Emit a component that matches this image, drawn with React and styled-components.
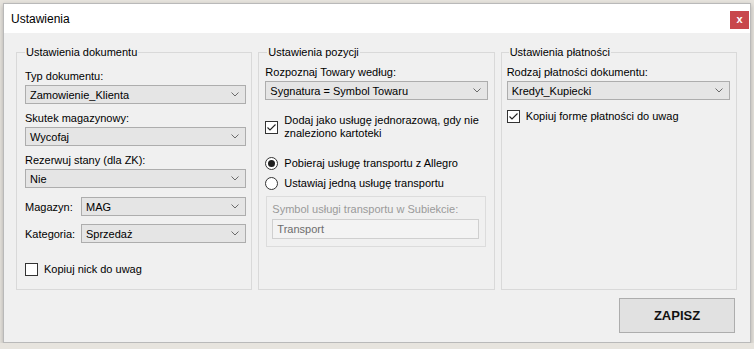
import React from 'react'
import styled, { createGlobalStyle } from 'styled-components'

const GlobalStyle = createGlobalStyle`
    html, body {
        margin: 0;
        padding: 0;
        background: #e7e4de;
        font-family: 'Liberation Sans', Arial, sans-serif;
    }
    * {
        box-sizing: border-box;
    }
`

const Window = styled.div`
    margin: 3px 0 0 3px;
    width: 748px;
    height: 340px;
    background: #f0f0f0;
    border: 1px solid #b9b9b9;
    box-shadow: 0 2px 5px rgba(0, 0, 0, 0.25);
    display: flex;
    flex-direction: column;
`

const TitleBar = styled.div`
    height: 29px;
    background: #ffffff;
    display: flex;
    justify-content: space-between;
    align-items: flex-start;
    padding-left: 7px;
`

const Title = styled.span`
    font-size: 12px;
    line-height: 14px;
    margin-top: 8px;
    color: #000;
`

const CloseButton = styled.div`
    width: 19px;
    height: 18px;
    margin-top: 7px;
    margin-right: 1px;
    background: #c8474c;
    color: #fff;
    font-size: 11px;
    font-weight: bold;
    display: flex;
    align-items: center;
    justify-content: center;
    padding-bottom: 2px;
`

const Content = styled.div`
    flex: 1;
    display: flex;
    flex-direction: column;
    padding: 12px 13px 9px 12px;
`

const Columns = styled.div`
    flex: 1;
    display: grid;
    grid-template-columns: 1fr 1fr 1fr;
    gap: 6px;
`

const Group = styled.fieldset`
    margin: 0;
    min-width: 0;
    border: 1px solid #d9d9d9;
    padding: ${(p) => p.$pt}px ${(p) => p.$pr}px 0 ${(p) => p.$pl}px;
    display: flex;
    flex-direction: column;
`

const Legend = styled.legend`
    font-size: 11px;
    line-height: 14px;
    padding: 0 1px;
    margin-left: ${(p) => p.$ml || 0}px;
    color: #000;
`

const Label = styled.div`
    font-size: 11px;
    line-height: 14px;
    color: #000;
    margin-top: ${(p) => p.$mt || 0}px;
    white-space: nowrap;
`

const Combo = styled.div`
    flex: none;
    height: 19px;
    margin-top: ${(p) => p.$mt || 0}px;
    background: #e5e5e5;
    border: 1px solid #adadad;
    display: flex;
    align-items: center;
    justify-content: space-between;
    padding: 0 6px 0 4px;
    font-size: 11px;
    color: #000;
    min-width: 0;
`

const InlineRow = styled.div`
    display: grid;
    grid-template-columns: 56px 1fr;
    align-items: center;
    margin-top: ${(p) => p.$mt || 0}px;
`

const CheckRow = styled.div`
    display: flex;
    align-items: center;
    gap: 6px;
    margin-top: ${(p) => p.$mt || 0}px;
    font-size: 11px;
    line-height: ${(p) => p.$lh || 14}px;
    color: #000;
`

const Box = styled.span`
    flex: none;
    width: 13px;
    height: 13px;
    border: 1px solid #333;
    background: #fff;
    display: flex;
    align-items: center;
    justify-content: center;
    border-radius: ${(p) => (p.$round ? '50%' : '0')};
`

const Dot = styled.span`
    width: 7px;
    height: 7px;
    border-radius: 50%;
    background: #1f1f1f;
`

const Panel = styled.div`
    margin: ${(p) => p.$mt || 0}px 2px 0 1px;
    border: 1px solid #dcdcdc;
    padding: 5px 6px 7px 5px;
`

const DisabledLabel = styled.div`
    font-size: 11px;
    line-height: 14px;
    color: #9a9a9a;
`

const TextBox = styled.div`
    margin-top: 3px;
    height: 20px;
    border: 1px solid #cfcfcf;
    background: #f3f3f3;
    font-size: 11px;
    color: #6d6d6d;
    display: flex;
    align-items: center;
    padding-left: 4px;
`

const Footer = styled.div`
    display: flex;
    justify-content: flex-end;
    margin-top: 8px;
    padding-right: 2px;
`

const SaveButton = styled.button`
    width: 116px;
    height: 35px;
    background: #e1e1e1;
    border: 1px solid #adadad;
    font-family: 'Liberation Sans', Arial, sans-serif;
    font-weight: bold;
    font-size: 13px;
    color: #111;
    padding: 0;
`

function Chevron() {
    return (
        <svg width="8" height="5" viewBox="0 0 8 5">
            <path d="M0.5 0.5 L4 4 L7.5 0.5" fill="none" stroke="#6a6a6a" strokeWidth="1" />
        </svg>
    )
}

function Select({ value, mt }) {
    return (
        <Combo $mt={mt}>
            <span>{value}</span>
            <Chevron />
        </Combo>
    )
}

function Checkbox({ checked }) {
    return (
        <Box>
            {checked && (
                <svg width="11" height="11" viewBox="0 0 11 11">
                    <path d="M1.5 5.5 L4 8 L9.5 2.5" fill="none" stroke="#222" strokeWidth="1.1" />
                </svg>
            )}
        </Box>
    )
}

function Radio({ checked }) {
    return <Box $round>{checked && <Dot />}</Box>
}

function App() {
    return (
        <>
            <GlobalStyle />
            <Window>
                <TitleBar>
                    <Title>Ustawienia</Title>
                    <CloseButton>x</CloseButton>
                </TitleBar>
                <Content>
                    <Columns>
                        <Group $pt={10} $pl={8} $pr={5}>
                            <Legend>Ustawienia dokumentu</Legend>
                            <Label>Typ dokumentu:</Label>
                            <Select mt={2} value="Zamowienie_Klienta" />
                            <Label $mt={7}>Skutek magazynowy:</Label>
                            <Select mt={2} value="Wycofaj" />
                            <Label $mt={7}>Rezerwuj stany (dla ZK):</Label>
                            <Select mt={2} value="Nie" />
                            <InlineRow $mt={9}>
                                <Label>Magazyn:</Label>
                                <Select value="MAG" />
                            </InlineRow>
                            <InlineRow $mt={8}>
                                <Label>Kategoria:</Label>
                                <Select value="Sprzedaż" />
                            </InlineRow>
                            <CheckRow $mt={19}>
                                <Checkbox />
                                Kopiuj nick do uwag
                            </CheckRow>
                        </Group>
                        <Group $pt={6} $pl={6} $pr={6}>
                            <Legend $ml={2}>Ustawienia pozycji</Legend>
                            <Label>Rozpoznaj Towary według:</Label>
                            <Select mt={2} value="Sygnatura = Symbol Towaru" />
                            <CheckRow $mt={14} $lh={13}>
                                <Checkbox checked />
                                <span>
                                    Dodaj jako usługę jednorazową, gdy nie
                                    <br />
                                    znaleziono kartoteki
                                </span>
                            </CheckRow>
                            <CheckRow $mt={16}>
                                <Radio checked />
                                Pobieraj usługę transportu z Allegro
                            </CheckRow>
                            <CheckRow $mt={6}>
                                <Radio />
                                Ustawiaj jedną usługę transportu
                            </CheckRow>
                            <Panel $mt={6}>
                                <DisabledLabel>Symbol usługi transportu w Subiekcie:</DisabledLabel>
                                <TextBox>Transport</TextBox>
                            </Panel>
                        </Group>
                        <Group $pt={6} $pl={5} $pr={6}>
                            <Legend $ml={2}>Ustawienia płatności</Legend>
                            <Label>Rodzaj płatności dokumentu:</Label>
                            <Select mt={2} value="Kredyt_Kupiecki" />
                            <CheckRow $mt={9}>
                                <Checkbox checked />
                                Kopiuj formę płatności do uwag
                            </CheckRow>
                        </Group>
                    </Columns>
                    <Footer>
                        <SaveButton>ZAPISZ</SaveButton>
                    </Footer>
                </Content>
            </Window>
        </>
    )
}

export default App
